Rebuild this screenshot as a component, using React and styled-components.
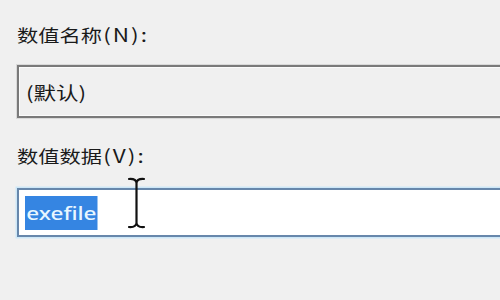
import React from "react";
import styled, { createGlobalStyle } from "styled-components";

const Global = createGlobalStyle`
  html, body { margin: 0; padding: 0; background: #f0f0f0; }
  #root { width: 500px; height: 300px; overflow: hidden; }
`;

const Page = styled.div`
  position: relative;
  width: 500px;
  height: 300px;
  overflow: hidden;
  background: #f0f0f0;
  padding: 22px 0 0 17px;
  box-sizing: border-box;
  font-family: "Noto Sans CJK SC", "Noto Sans", sans-serif;
  color: #1a1a1a;
`;

const Label = styled.div`
  height: 24px;
  line-height: 24px;
  font-size: 17px;
  font-weight: 400;
  margin-top: ${(p) => p.$top || 0}px;
  white-space: nowrap;
`;

const Stretch = styled.span`
  display: inline-block;
  transform: scaleX(1.25);
  transform-origin: left center;
`;

const Latin = styled.span`
  font-size: 18px;
  letter-spacing: 1.6px;
  margin-left: 1px;
`;

const Field = styled.div`
  box-sizing: border-box;
  width: 520px;
  height: ${(p) => p.$h}px;
  margin-top: ${(p) => p.$top}px;
  display: flex;
  align-items: center;
  padding-left: ${(p) => p.$pad}px;
  border: 2px solid ${(p) => (p.$focus ? "#6787ab" : "#7a7a7a")};
  background: ${(p) => (p.$focus ? "#ffffff" : "#f0f0f0")};
  box-shadow: ${(p) =>
    p.$focus
      ? "0 0 0 1.5px #cde7f7"
      : "0 0 0 1px #d9d9d9, inset 0 0 0 1px #fbfbfb"};
  font-size: 18px;
  font-weight: 400;
  white-space: nowrap;
`;

const Selected = styled.span`
  display: inline-block;
  height: 34px;
  line-height: 34px;
  padding: 0 1px;
  background: #3585e2;
  color: #e8f6ff;
  font-family: "Noto Sans", "Open Sans", sans-serif;
  font-size: 18px;
  font-weight: 500;
`;

const Cursor = styled.svg`
  position: absolute;
  left: 127px;
  top: 177px;
`;

export default function App() {
  return (
    <>
      <Global />
      <Page>
        <Label>
          <Stretch>
            数值名称<Latin>(N):</Latin>
          </Stretch>
        </Label>
        <Field $h={53} $top={19} $pad={7}>
          <Stretch>(默认)</Stretch>
        </Field>
        <Label $top={25}>
          <Stretch>
            数值数据<Latin>(V):</Latin>
          </Stretch>
        </Label>
        <Field $h={49} $top={21} $pad={6} $focus>
          <Stretch>
            <Selected>exefile</Selected>
          </Stretch>
        </Field>
        <Cursor width="19" height="52" viewBox="0 0 19 52">
          <path
            d="M2 2 Q9 1.5 9.5 6 Q10 1.5 17 2 M9.5 6 L9.5 46 M2 50 Q9 50.5 9.5 46 Q10 50.5 17 50"
            fill="none"
            stroke="#111"
            strokeWidth="2.2"
            strokeLinecap="round"
          />
        </Cursor>
      </Page>
    </>
  );
}
